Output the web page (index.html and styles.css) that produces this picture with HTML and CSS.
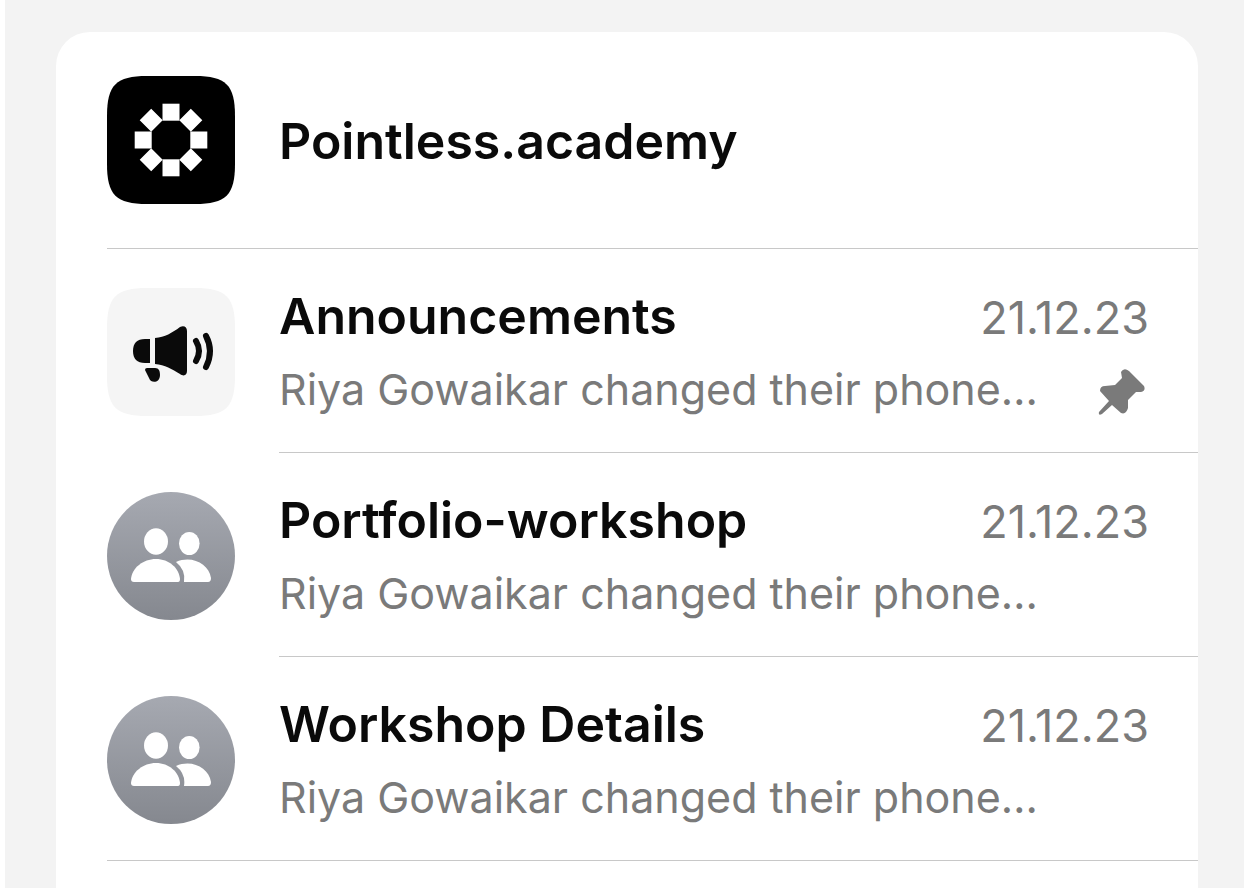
FILE: index.html
```html
<!DOCTYPE html>
<html lang="en">
<head>
<meta charset="utf-8">
<title>Pointless.academy</title>
<link rel="stylesheet" href="styles.css">
</head>
<body>

<main class="card">
  <header class="community">
    <svg class="avatar" viewBox="0 0 128 128" aria-hidden="true">
      <path d="M0 40C0 9 9 0 40 0H88C119 0 128 9 128 40V88C128 119 119 128 88 128H40C9 128 0 119 0 88Z" fill="#000"/>
      <g fill="#fff">
        <rect x="55.5" y="27.7" width="17" height="17"/>
        <rect x="55.5" y="83.3" width="17" height="17"/>
        <rect x="27.7" y="55.5" width="17" height="17"/>
        <rect x="83.3" y="55.5" width="17" height="17"/>
        <path d="M44.2 32.7l11.5 11.5-11.5 11.5-11.5-11.5zM83.8 32.7l11.5 11.5-11.5 11.5-11.5-11.5zM44.2 72.3l11.5 11.5-11.5 11.5-11.5-11.5zM83.8 72.3l11.5 11.5-11.5 11.5-11.5-11.5z"/>
      </g>
    </svg>
    <h1 class="title">Pointless.academy</h1>
  </header>

  <ul class="groups">
    <li class="group">
      <svg class="avatar" viewBox="0 0 128 128" aria-hidden="true">
        <path d="M0 40C0 9 9 0 40 0H88C119 0 128 9 128 40V88C128 119 119 128 88 128H40C9 128 0 119 0 88Z" fill="#f5f5f5"/>
        <path d="M43 51V75H38C30 75 26 71 26 63S30 51 38 51ZM48 50C58 49 65 45 73 39C77 37 80 39 80 43V83C80 87 77 89 73 86C65 81 58 77 48 76ZM40 80H48C52 80 53 83 53 87C53 95 44 96 42 90L38 82Q38 80 40 80Z" fill="#0a0a0a"/>
        <path d="M89 53Q95 63 89 73M99 48Q107 63 99 79" fill="none" stroke="#0a0a0a" stroke-width="6" stroke-linecap="round"/>
      </svg>
      <div class="info">
        <div class="line">
          <h2 class="title">Announcements</h2>
          <time class="date" datetime="2023-12-21">21.12.23</time>
        </div>
        <div class="line">
          <p class="preview">Riya Gowaikar changed their phone…</p>
          <svg class="pin" viewBox="0 0 48 48" role="img" aria-label="Pinned">
            <path d="M23 4Q26-1 31 3L46 18Q48 23 43 24L38 24L30 32V40Q28 47 23 45L14 37L4 46Q0 48 1 44L11 33L2 23Q2 18 7 18L17 17L24 10Z" fill="#7a7a7a"/>
          </svg>
        </div>
      </div>
    </li>

    <li class="group">
      <svg class="avatar" viewBox="0 0 128 128" aria-hidden="true">
        <defs>
          <linearGradient id="grey" x1="0" y1="0" x2="0" y2="1">
            <stop offset="0" stop-color="#a6a9b1"/>
            <stop offset="1" stop-color="#85888f"/>
          </linearGradient>
          <g id="people" fill="#fff">
            <ellipse cx="49" cy="49.5" rx="12" ry="13.2"/>
            <ellipse cx="82.3" cy="51.5" rx="10.3" ry="11.5"/>
            <path d="M27 90Q24 90 24 87C25 76 36 67 49 67S72 76 73 87Q73 90 71 90Z"/>
            <path d="M69 70C85 63 102 72 104 86Q104 90 101 90H77Q79 78 69 70Z"/>
          </g>
        </defs>
        <circle cx="64" cy="64" r="64" fill="url(#grey)"/>
        <use href="#people"/>
      </svg>
      <div class="info">
        <div class="line">
          <h2 class="title">Portfolio-workshop</h2>
          <time class="date" datetime="2023-12-21">21.12.23</time>
        </div>
        <div class="line">
          <p class="preview">Riya Gowaikar changed their phone…</p>
        </div>
      </div>
    </li>

    <li class="group">
      <svg class="avatar" viewBox="0 0 128 128" aria-hidden="true">
        <circle cx="64" cy="64" r="64" fill="url(#grey)"/>
        <use href="#people"/>
      </svg>
      <div class="info">
        <div class="line">
          <h2 class="title">Workshop Details</h2>
          <time class="date" datetime="2023-12-21">21.12.23</time>
        </div>
        <div class="line">
          <p class="preview">Riya Gowaikar changed their phone…</p>
        </div>
      </div>
    </li>
  </ul>
</main>

</body>
</html>
```

FILE: styles.css
```css
* {
  box-sizing: border-box;
}

body {
  display: flex;
  min-height: 100vh;
  margin: 0;
  padding: 32px 46px 0 51px;
  border-left: 5px solid #fff;
  background-color: #f3f3f3;
  font-family: Inter, "Liberation Sans", sans-serif;
  color: #0a0a0a;
}

html {
  background-color: #fff;
}

.card {
  flex: 1;
  min-width: 0;
  padding-left: 51px;
  border-radius: 34px 34px 0 0;
  background-color: #fff;
}

.community {
  display: flex;
  align-items: center;
  gap: 44px;
  padding: 44px 0;
  border-bottom: 1px solid #c8c8c8;
}

.avatar {
  flex: none;
  width: 128px;
  height: 128px;
}

.title,
.preview {
  margin: 0;
}

.title {
  padding-top: 2px;
  font-size: 50px;
  font-weight: 600;
  line-height: 60px;
}

.groups {
  margin: 0;
  padding: 0;
  list-style: none;
}

.group {
  display: flex;
  gap: 44px;
}

.group .avatar {
  margin-top: 39px;
}

.info {
  flex: 1;
  min-width: 0;
  padding: 35px 49px 36px 0;
  border-bottom: 1px solid #c8c8c8;
}

/* last divider runs under the avatar as well */
.group:last-child {
  border-bottom: 1px solid #c8c8c8;
}

.group:last-child .info {
  border-bottom: none;
}

.line {
  display: flex;
  justify-content: space-between;
  align-items: baseline;
}

.line + .line {
  align-items: flex-end;
  margin-top: 16px;
}

.date,
.preview {
  font-size: 43px;
  line-height: 54px;
  color: #7a7a7a;
}

.date {
  font-size: 45px;
}

.preview {
  overflow: hidden;
  white-space: nowrap;
  text-overflow: ellipsis;
}

.pin {
  flex: none;
  width: 48px;
  height: 48px;
  margin-right: 3px;
}
```
